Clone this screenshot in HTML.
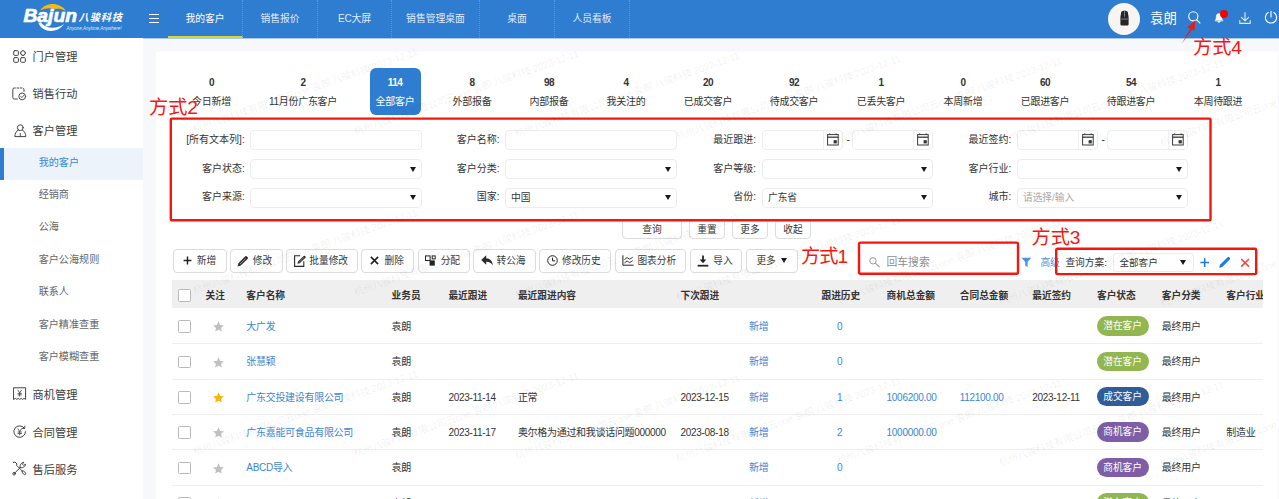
<!DOCTYPE html>
<html lang="zh-CN">
<head>
<meta charset="utf-8">
<title>我的客户</title>
<style>
*{box-sizing:border-box;margin:0;padding:0}
html,body{width:1279px;height:499px;overflow:hidden;background:#f7f8fc}
body{font-family:"Liberation Sans","Noto Sans CJK SC",sans-serif;font-size:11px;color:#333;position:relative}
.a{position:absolute;white-space:nowrap;line-height:1}
/* header */
#hd{left:0;top:0;width:1279px;height:38px;background:#2e7dd1}
.tab{top:0;height:38px;color:rgba(255,255,255,.88);font-size:9.8px;line-height:37.4px;text-align:center;border-right:1px dotted rgba(255,255,255,.2)}
.tab.on{border-bottom:2px solid #d6d82a;color:#fff}
/* sidebar */
#sb{left:0;top:38px;width:143px;height:461px;background:#fff}
.m1{left:32.6px;font-size:11.2px;color:#3c3c3c}
.m2{left:38.7px;font-size:10.1px;color:#666}
/* panel */
#pn{left:156px;top:52px;width:1122px;height:447px;background:#fff}

.st{width:100px;text-align:center;font-size:10px;letter-spacing:-.5px;font-weight:bold;color:#333}
.sl{width:100px;text-align:center;font-size:10px;letter-spacing:-.3px;color:#333}
.st.on,.sl.on{color:#fff}
.fl{width:90px;text-align:right;font-size:10px;letter-spacing:0;color:#333}
.fi{height:20px;border:1px solid #ececec;border-radius:4px;background:#fff;font-size:9.7px;line-height:18px;padding-left:5px;color:#333}
.tri{width:0;height:0;border-left:3.4px solid transparent;border-right:3.4px solid transparent;border-top:5px solid #1a1a1a}
.bt{border:1px solid #dcdcdc;border-radius:4px;background:#fff;text-align:center;font-size:9.7px;color:#333}
.tt{font-size:9.7px;color:#3a3a3a}
.th{font-size:9.7px;font-weight:bold;color:#333}
.td{font-size:10px;letter-spacing:-.3px;color:#333}
.lk{color:#3b86d6}
.cb{width:12.8px;height:12.8px;border:1px solid #b9b9b9;border-radius:1.5px;background:#fff}
.star{font-size:13px}
.pill{width:52.2px;height:19.2px;line-height:19px;border-radius:10px;color:#fff;font-size:9.7px;text-align:center}
.wm{font-size:10px;letter-spacing:-.25px;color:rgba(0,0,0,.075);transform:rotate(-19.3deg);transform-origin:0 100%;height:10px}
.rt{color:#f5160f;font-size:19.2px}
</style>
</head>
<body>
<!-- HEADER -->
<div id="hd" class="a"></div>
<div class="a" style="left:0;top:38px;width:1279px;height:1px;background:#a9c9ec"></div><div class="a" style="left:0;top:39px;width:1279px;height:1px;background:#fdfdfe"></div><div class="a" style="left:156px;top:51px;width:1122px;height:1px;background:#fafbfd"></div>
<svg class="a" style="left:15px;top:0" width="130" height="38" viewBox="0 0 130 38">
<path d="M25.2 10.4 C30 2.2 44.5 1.2 51 10.9 C46.5 8.6 43 8.4 40.5 9 C35 7.6 30 8 25.2 10.4Z" fill="#f7b90f"/>
<path d="M23.4 23 C27.5 33.2 42.5 33.6 49 24 C42 29.4 31 29 25.8 22.4Z" fill="#fff"/>
<text x="8.4" y="22.2" font-family="Liberation Sans, sans-serif" font-weight="bold" font-style="italic" font-size="18.6" textLength="53.6" lengthAdjust="spacingAndGlyphs" fill="#fff" stroke="#fff" stroke-width=".7">Bajun</text>
<text x="63.6" y="21.2" font-family="Liberation Sans, Noto Sans CJK SC, sans-serif" font-weight="bold" font-style="italic" font-size="10.2" textLength="43.4" fill="#fff">八骏科技</text>
<text x="51.5" y="29.6" font-family="Liberation Sans, sans-serif" font-style="italic" font-size="4.7" textLength="55" lengthAdjust="spacingAndGlyphs" fill="#fff" fill-opacity=".85">Anyone,Anytime,Anywhere!</text>
</svg>
<!--HR-->
<div class="a" style="left:1108px;top:3px;width:32px;height:32px;border-radius:16px;background:#f6f5f3"></div>
<svg class="a" style="left:1118px;top:9px" width="13" height="18" viewBox="0 0 13 18">
<path d="M3.2 3.2 C3.2 1.2 9.8 1.2 9.8 3.2 L10.6 8 L10.6 15.2 Q10.6 16.6 9.2 16.6 L3.8 16.6 Q2.4 16.6 2.4 15.2 L2.4 8Z" fill="#26262a"/>
<rect x="6.1" y="1.6" width="0.9" height="6" fill="#8a8a8a"/>
<rect x="3.2" y="9.6" width="6.6" height="0.9" fill="#8d8d8d"/>
</svg>
<div class="a" style="left:1150px;top:12px;font-size:13.4px;color:#fff">袁朗</div>
<svg class="a" style="left:1184px;top:8px" width="95" height="22" viewBox="0 0 95 22" fill="none" stroke="#fff" stroke-width="1.1" stroke-linecap="round" stroke-linejoin="round">
<circle cx="9.3" cy="8.3" r="4.6"/><path d="M12.6 11.6 L16 15"/>
<path d="M31.2 12.6 C32.4 11.4 32.2 9.6 32.4 7.6 C32.6 5 37.4 5 37.6 7.6 C37.8 9.6 37.6 11.4 38.8 12.6 Z M33.8 13.8 Q35 15.2 36.2 13.8Z" fill="#fff" stroke-width=".6"/>
<path d="M61 4.6 V12.6 M57.4 9.4 L61 12.8 L64.6 9.4 M55.8 12.6 V15.4 H66.2 V12.6" stroke-opacity=".85"/>
<path d="M87 3.4 V9" /><path d="M84.2 4.6 A5.6 5.6 0 1 0 89.8 4.6"/>
</svg>
<div class="a" style="left:1219.5px;top:10px;width:8px;height:8px;border-radius:4px;background:#f80000"></div>
<!--/HR-->
<div class="a" style="left:149px;top:14px;width:10px;height:9px;border-top:1px solid #fff;border-bottom:1px solid #fff"><div style="margin-top:3px;height:1px;background:#fff"></div></div>
<div class="a tab on" style="left:168px;width:75px">我的客户</div>
<div class="a tab" style="left:243px;width:75px">销售报价</div>
<div class="a tab" style="left:318px;width:74px;font-size:10px;letter-spacing:-.2px">EC大屏</div>
<div class="a tab" style="left:392px;width:88px">销售管理桌面</div>
<div class="a tab" style="left:480px;width:75px">桌面</div>
<div class="a tab" style="left:555px;width:75px">人员看板</div>

<!-- SIDEBAR -->
<div id="sb" class="a"></div>
<div class="a" style="left:0;top:147.5px;width:143px;height:32.3px;background:#edf3fb"></div><div class="a" style="left:0;top:147.5px;width:3.5px;height:32.3px;background:#2e7dd1"></div>
<svg class="a" style="left:13px;top:49.6px" width="13" height="13" viewBox="0 0 13 13" stroke="#444" stroke-width="1" fill="none" stroke-linecap="round" stroke-linejoin="round"><rect x=".7" y=".7" width="4.7" height="4.7" rx="1"/><rect x=".7" y="7.6" width="4.7" height="4.7" rx="1"/><rect x="7.6" y="7.6" width="4.7" height="4.7" rx="1"/><rect x="7.9" y="1" width="4.1" height="4.1" rx="1.2" transform="rotate(45 9.95 3.05)"/></svg><div class="a m1" style="top:52.3px">门户管理</div>
<svg class="a" style="left:12.4px;top:86.6px" width="15" height="14" viewBox="0 0 15 14" stroke="#444" stroke-width="1" fill="none" stroke-linecap="round" stroke-linejoin="round"><path d="M3.4 1H2.2Q.8 1 .8 2.4V10.6Q.8 12 2.2 12H5.4"/><path d="M5 1H6.6M8.2 1H9.8M11.2 1.2Q12 1.6 12 2.6V4.4"/><circle cx="10.2" cy="9.4" r="3.4"/><path d="M8.7 9.4L9.9 10.6L11.8 8.4" stroke-width=".9"/></svg><div class="a m1" style="top:89.4px">销售行动</div>
<svg class="a" style="left:13.6px;top:123.6px" width="13" height="14" viewBox="0 0 13 14" stroke="#444" stroke-width="1" fill="none" stroke-linecap="round" stroke-linejoin="round"><circle cx="6.3" cy="3.7" r="2.9"/><path d="M4.2 6C1.8 7.4.9 10 .8 12.6H11.8C11.7 10 10.8 7.4 8.4 6"/><path d="M6.3 9.4V12.4" stroke-width=".9"/></svg><div class="a m1" style="top:126.4px">客户管理</div>
<div class="a m2" style="top:157.7px;color:#3a86d6">我的客户</div><div class="a m2" style="top:190.2px">经销商</div><div class="a m2" style="top:222.2px">公海</div><div class="a m2" style="top:254.7px">客户公海规则</div><div class="a m2" style="top:287.2px">联系人</div><div class="a m2" style="top:319.6px">客户精准查重</div><div class="a m2" style="top:351.7px">客户模糊查重</div>
<svg class="a" style="left:12.6px;top:387.4px" width="14" height="14" viewBox="0 0 14 14" stroke="#444" stroke-width="1" fill="none" stroke-linecap="round" stroke-linejoin="round"><path d="M.8 .8H12.6V12.4L11.1 11.4L9.6 12.4L8.2 11.4L6.7 12.4L5.2 11.4L3.8 12.4L2.3 11.4L.8 12.4Z"/><path d="M4.9 3.2L6.7 5.8L8.5 3.2M6.7 5.8V9.4M5 6.4H8.4M5 7.9H8.4" stroke-width=".85"/></svg><div class="a m1" style="top:390.4px">商机管理</div>
<svg class="a" style="left:12.6px;top:425.2px" width="14" height="14" viewBox="0 0 14 14" stroke="#444" stroke-width="1" fill="none" stroke-linecap="round" stroke-linejoin="round"><path d="M11.4 3.2A5.8 5.8 0 1 0 12.5 6.6"/><path d="M11.8 1L11.6 3.6L9 3.4" stroke-width=".9"/><path d="M4.9 3.8L6.7 6.4L8.5 3.8M6.7 6.4V10M5 7H8.4M5 8.5H8.4" stroke-width=".85"/></svg><div class="a m1" style="top:427.9px">合同管理</div>
<svg class="a" style="left:12.2px;top:461.4px" width="15" height="15" viewBox="0 0 15 15" stroke="#444" stroke-width="1" fill="none" stroke-linecap="round" stroke-linejoin="round"><path d="M2.2 12.6L8.2 6.6"/><path d="M8.2 6.6C7.4 4.4 9 1.6 11.8 1.2L10.4 3.2L11.6 4.4L13.6 3.2C13.2 5.8 10.4 7.4 8.2 6.6Z"/><circle cx="2.1" cy="12.7" r="1.3"/><path d="M1.4 1.4L3 1L5 3L4.4 4.2L10.8 10.6"/><path d="M10 10.4L11 9.4L13.6 12Q14 13 13.2 13.6Q12.4 14 11.8 13.4Z"/></svg><div class="a m1" style="top:464.9px">售后服务</div>

<!-- PANEL -->
<div id="pn" class="a"></div>
<!--STATS-->
<div class="a" style="left:369.5px;top:68px;width:51px;height:47px;border-radius:6px;background:#2e7dd1"></div>
<div class="a st" style="left:161.5px;top:77.6px">0</div><div class="a sl" style="left:161.5px;top:96.5px">今日新增</div>
<div class="a st" style="left:253px;top:77.6px">2</div><div class="a sl" style="left:253px;top:96.5px">11月份广东客户</div>
<div class="a st on" style="left:345px;top:77.6px">114</div><div class="a sl on" style="left:345px;top:96.5px">全部客户</div>
<div class="a st" style="left:422px;top:77.6px">8</div><div class="a sl" style="left:422px;top:96.5px">外部报备</div>
<div class="a st" style="left:499px;top:77.6px">98</div><div class="a sl" style="left:499px;top:96.5px">内部报备</div>
<div class="a st" style="left:576px;top:77.6px">4</div><div class="a sl" style="left:576px;top:96.5px">我关注的</div>
<div class="a st" style="left:658px;top:77.6px">20</div><div class="a sl" style="left:658px;top:96.5px">已成交客户</div>
<div class="a st" style="left:744px;top:77.6px">92</div><div class="a sl" style="left:744px;top:96.5px">待成交客户</div>
<div class="a st" style="left:831px;top:77.6px">1</div><div class="a sl" style="left:831px;top:96.5px">已丢失客户</div>
<div class="a st" style="left:913px;top:77.6px">0</div><div class="a sl" style="left:913px;top:96.5px">本周新增</div>
<div class="a st" style="left:995px;top:77.6px">60</div><div class="a sl" style="left:995px;top:96.5px">已跟进客户</div>
<div class="a st" style="left:1081px;top:77.6px">54</div><div class="a sl" style="left:1081px;top:96.5px">待跟进客户</div>
<div class="a st" style="left:1168px;top:77.6px">1</div><div class="a sl" style="left:1168px;top:96.5px">本周待跟进</div>
<!--/STATS-->
<!--FILTER-->
<div class="a fl" style="left:154.7px;top:134.7px">[所有文本列]:</div><div class="a fi" style="left:250px;top:130px;width:172px"></div>
<div class="a fl" style="left:409.6px;top:134.7px">客户名称:</div><div class="a fi" style="left:505px;top:130px;width:172px"></div>
<div class="a fl" style="left:666px;top:134.7px">最近跟进:</div><div class="a fi" style="left:762px;top:130px;width:81px"></div><div class="a" style="left:823px;top:131px;width:1px;height:18px;background:#efefef"></div><svg class="a" style="left:827.4px;top:133px" width="12" height="13" viewBox="0 0 12 13"><rect x=".6" y="1.6" width="10.6" height="10.4" fill="#fff" stroke="#3a3a3a" stroke-width="1"/><path d="M.6 4.2H11.2" stroke="#3a3a3a" stroke-width="1.3"/><path d="M2.6 .4V1.6M9.2 .4V1.6" stroke="#3a3a3a" stroke-width="1.2"/><rect x="6.6" y="7.2" width="3.2" height="3.2" fill="#333"/></svg><div class="a fi" style="left:852px;top:130px;width:81px"></div><div class="a" style="left:913px;top:131px;width:1px;height:18px;background:#efefef"></div><svg class="a" style="left:917.4px;top:133px" width="12" height="13" viewBox="0 0 12 13"><rect x=".6" y="1.6" width="10.6" height="10.4" fill="#fff" stroke="#3a3a3a" stroke-width="1"/><path d="M.6 4.2H11.2" stroke="#3a3a3a" stroke-width="1.3"/><path d="M2.6 .4V1.6M9.2 .4V1.6" stroke="#3a3a3a" stroke-width="1.2"/><rect x="6.6" y="7.2" width="3.2" height="3.2" fill="#333"/></svg><div class="a" style="left:846.6px;top:134.6px;font-size:10px;color:#333">-</div>
<div class="a fl" style="left:921.3px;top:134.7px">最近签约:</div><div class="a fi" style="left:1017px;top:130px;width:81px"></div><div class="a" style="left:1078px;top:131px;width:1px;height:18px;background:#efefef"></div><svg class="a" style="left:1082.4px;top:133px" width="12" height="13" viewBox="0 0 12 13"><rect x=".6" y="1.6" width="10.6" height="10.4" fill="#fff" stroke="#3a3a3a" stroke-width="1"/><path d="M.6 4.2H11.2" stroke="#3a3a3a" stroke-width="1.3"/><path d="M2.6 .4V1.6M9.2 .4V1.6" stroke="#3a3a3a" stroke-width="1.2"/><rect x="6.6" y="7.2" width="3.2" height="3.2" fill="#333"/></svg><div class="a fi" style="left:1107px;top:130px;width:81px"></div><div class="a" style="left:1168px;top:131px;width:1px;height:18px;background:#efefef"></div><svg class="a" style="left:1172.4px;top:133px" width="12" height="13" viewBox="0 0 12 13"><rect x=".6" y="1.6" width="10.6" height="10.4" fill="#fff" stroke="#3a3a3a" stroke-width="1"/><path d="M.6 4.2H11.2" stroke="#3a3a3a" stroke-width="1.3"/><path d="M2.6 .4V1.6M9.2 .4V1.6" stroke="#3a3a3a" stroke-width="1.2"/><rect x="6.6" y="7.2" width="3.2" height="3.2" fill="#333"/></svg><div class="a" style="left:1101.6px;top:134.6px;font-size:10px;color:#333">-</div>
<div class="a fl" style="left:154.7px;top:163.5px">客户状态:</div><div class="a fi" style="left:250px;top:159px;width:172px"></div><div class="a tri" style="left:410.4px;top:166.6px"></div>
<div class="a fl" style="left:409.6px;top:163.5px">客户分类:</div><div class="a fi" style="left:505px;top:159px;width:172px"></div><div class="a tri" style="left:665.4px;top:166.6px"></div>
<div class="a fl" style="left:666px;top:163.5px">客户等级:</div><div class="a fi" style="left:762px;top:159px;width:171px"></div><div class="a tri" style="left:921.4px;top:166.6px"></div>
<div class="a fl" style="left:921.3px;top:163.5px">客户行业:</div><div class="a fi" style="left:1017px;top:159px;width:171px"></div><div class="a tri" style="left:1176.4px;top:166.6px"></div>
<div class="a fl" style="left:154.7px;top:192.4px">客户来源:</div><div class="a fi" style="left:250px;top:188px;width:172px"></div><div class="a tri" style="left:410.4px;top:194.7px"></div>
<div class="a fl" style="left:409.6px;top:192.4px">国家:</div><div class="a fi" style="left:505px;top:188px;width:172px">中国</div><div class="a tri" style="left:665.4px;top:194.7px"></div>
<div class="a fl" style="left:666px;top:192.4px">省份:</div><div class="a fi" style="left:762px;top:188px;width:171px">广东省</div><div class="a tri" style="left:921.4px;top:194.7px"></div>
<div class="a fl" style="left:921.3px;top:192.4px">城市:</div><div class="a fi" style="left:1017px;top:188px;width:171px"><span style="color:#a9a9a9">请选择/输入</span></div><div class="a tri" style="left:1176.4px;top:194.7px"></div>
<div class="a bt" style="left:622px;top:219px;width:60px;height:20px;line-height:19px">查询</div><div class="a bt" style="left:689px;top:219px;width:36px;height:20px;line-height:19px">重置</div><div class="a bt" style="left:732px;top:219px;width:36px;height:20px;line-height:19px">更多</div><div class="a bt" style="left:775px;top:219px;width:36px;height:20px;line-height:19px">收起</div>
<!--/FILTER-->
<!--TOOLBAR-->
<div class="a bt" style="left:173.2px;top:249.2px;width:53.6px;height:23.4px"></div><div class="a" style="left:183px;top:256.3px;height:9px"><svg width="9" height="9" viewBox="0 0 9 9"><path d="M4.5 .6V8.4M.6 4.5H8.4" stroke="#222" stroke-width="1.5" fill="none"/></svg></div><div class="a tt" style="left:196.8px;top:255.6px">新增</div>
<div class="a bt" style="left:230px;top:249.2px;width:53px;height:23.4px"></div><div class="a" style="left:237.1px;top:254.8px;height:12px"><svg width="12" height="12" viewBox="0 0 12 12"><path d="M.6 11.4 L1.4 8.2 L8.3 1.3 Q9.1 .6 9.9 1.4 L10.7 2.2 Q11.4 3 10.7 3.8 L3.8 10.6Z" fill="#2a2a2a"/><path d="M2.9 9.2 L8.6 3.5" stroke="#fff" stroke-width=".7" stroke-opacity=".75"/></svg></div><div class="a tt" style="left:252.8px;top:255.6px">修改</div>
<div class="a bt" style="left:286px;top:249.2px;width:71.8px;height:23.4px"></div><div class="a" style="left:293.9px;top:254.8px;height:12px"><svg width="13" height="12" viewBox="0 0 13 12"><path d="M9.8 6.2V11.4H.6V.8H6.2" stroke="#2a2a2a" stroke-width="1.1" fill="none"/><path d="M3.5 8.7 L4 6.6 L9.7 .9 Q10.3 .4 10.9 1 L11.5 1.6 Q12 2.2 11.5 2.8 L5.7 8.3Z" fill="#2a2a2a"/><path d="M5.2 7.2 L9.9 2.5" stroke="#fff" stroke-width=".6" stroke-opacity=".7"/></svg></div><div class="a tt" style="left:309.3px;top:255.6px">批量修改</div>
<div class="a bt" style="left:361px;top:249.2px;width:53.4px;height:23.4px"></div><div class="a" style="left:370px;top:256.3px;height:9px"><svg width="9" height="9" viewBox="0 0 9 9"><path d="M.9 .9L8.1 8.1M8.1 .9L.9 8.1" stroke="#222" stroke-width="1.6" fill="none"/></svg></div><div class="a tt" style="left:384.5px;top:255.6px">删除</div>
<div class="a bt" style="left:417.8px;top:249.2px;width:52.4px;height:23.4px"></div><div class="a" style="left:424.8px;top:255.3px;height:11px"><svg width="11" height="11" viewBox="0 0 11 11"><rect x=".5" y=".9" width="4.6" height="4.6" fill="none" stroke="#222" stroke-width="1"/><rect x="7.2" y=".9" width="3" height="3" fill="none" stroke="#222" stroke-width="1"/><rect x="4.6" y="5.4" width="5.2" height="5.2" fill="#222"/></svg></div><div class="a tt" style="left:440.7px;top:255.6px">分配</div>
<div class="a bt" style="left:473.3px;top:249.2px;width:62.4px;height:23.4px"></div><div class="a" style="left:481px;top:255.3px;height:11px"><svg width="12" height="11" viewBox="0 0 12 11"><path d="M5.2 .3 L.2 5 L5.2 9.7 V6.8 C8.2 6.7 10.2 7.8 11.8 10.6 C11.6 6 9 3.4 5.2 3.2Z" fill="#2a2a2a"/></svg></div><div class="a tt" style="left:496.5px;top:255.6px">转公海</div>
<div class="a bt" style="left:539.3px;top:249.2px;width:71.5px;height:23.4px"></div><div class="a" style="left:546.6px;top:255.3px;height:11px"><svg width="11" height="11" viewBox="0 0 11 11"><circle cx="5.5" cy="5.5" r="4.8" fill="none" stroke="#222" stroke-width="1"/><path d="M5.5 2.6V5.8H8.2" fill="none" stroke="#222" stroke-width="1"/></svg></div><div class="a tt" style="left:562px;top:255.6px">修改历史</div>
<div class="a bt" style="left:614.7px;top:249.2px;width:71.7px;height:23.4px"></div><div class="a" style="left:621.6px;top:255.3px;height:11px"><svg width="12" height="11" viewBox="0 0 12 11"><path d="M.9 .4V10.2H11.6" fill="none" stroke="#222" stroke-width="1"/><path d="M2.4 4.6 L5 2.6 L7.6 4.2 L10.8 2.2 M2.4 8 L5 6 L7.6 7.6 L10.8 5.6" fill="none" stroke="#222" stroke-width=".9"/></svg></div><div class="a tt" style="left:637.4px;top:255.6px">图表分析</div>
<div class="a bt" style="left:690.4px;top:249.2px;width:51.9px;height:23.4px"></div><div class="a" style="left:697.4px;top:254.8px;height:12px"><svg width="12" height="12" viewBox="0 0 11 11"><path d="M5.5 .4V6.4" stroke="#222" stroke-width="1.6" fill="none"/><path d="M2.4 4.2 L5.5 7.6 L8.6 4.2Z" fill="#222"/><path d="M.6 9.8H10.4" stroke="#222" stroke-width="1.6"/></svg></div><div class="a tt" style="left:713.3px;top:255.6px">导入</div>
<div class="a bt" style="left:746.4px;top:249.2px;width:51.8px;height:23.4px"></div><div class="a tt" style="left:756.4px;top:255.6px">更多</div>
<div class="a tri" style="left:781.4px;top:258.2px"></div>
<svg class="a" style="left:868px;top:256px" width="14" height="14" viewBox="0 0 14 14"><circle cx="5" cy="4.8" r="3.2" fill="none" stroke="#9a9a9a" stroke-width="1"/><path d="M7.4 7.2L11.6 11.2" stroke="#9a9a9a" stroke-width="1.1"/></svg><div class="a" style="left:886.5px;top:257px;font-size:10.8px;color:#8e8e8e">回车搜索</div>
<svg class="a" style="left:1021px;top:257px" width="11" height="11" viewBox="0 0 11 11"><path d="M.6 .8H10.2L6.6 5V10L4.2 8.6V5Z" fill="#4a93dd"/></svg><div class="a" style="left:1040.4px;top:257.6px;font-size:9.7px;color:#4a90d9">高级</div>
<div class="a" style="left:1065.4px;top:257.8px;font-size:9.7px;color:#333">查询方案:</div><div class="a fi" style="left:1113px;top:253px;width:81px;height:19px;border-radius:3px"></div><div class="a" style="left:1119.4px;top:258px;font-size:9.6px;color:#333">全部客户</div><div class="a tri" style="left:1180.4px;top:260.2px"></div>
<svg class="a" style="left:1199px;top:255px" width="54" height="15" viewBox="0 0 54 15"><path d="M5.7 3.3V11.9M1.4 7.6H10" stroke="#1b7ce0" stroke-width="1.5" fill="none"/><path d="M20.2 12.8 L21 9.8 L28.6 2.2 Q29.4 1.5 30.2 2.3 L30.8 2.9 Q31.5 3.7 30.8 4.5 L23.2 12Z" fill="#1b7ce0"/><path d="M42.2 4L50 11.6M50 4L42.2 11.6" stroke="#ee4a3e" stroke-width="1.6" fill="none"/></svg>
<!--/TOOLBAR-->
<!--TABLE-->
<div class="a" style="left:172px;top:280.3px;width:1091px;height:27.9px;background:#efefef"></div>
<div class="a" style="left:172px;top:280px;width:1091px;height:30px;overflow:hidden"><div class="a th" style="left:33.6px;top:10.8px">关注</div><div class="a th" style="left:74.3px;top:10.8px">客户名称</div><div class="a th" style="left:219.6px;top:10.8px">业务员</div><div class="a th" style="left:276.4px;top:10.8px">最近跟进</div><div class="a th" style="left:345.9px;top:10.8px">最近跟进内容</div><div class="a th" style="left:508.5px;top:10.8px">下次跟进</div><div class="a th" style="left:649.5px;top:10.8px">跟进历史</div><div class="a th" style="left:714.6px;top:10.8px">商机总金额</div><div class="a th" style="left:787.8px;top:10.8px">合同总金额</div><div class="a th" style="left:860.3px;top:10.8px">最近签约</div><div class="a th" style="left:925px;top:10.8px">客户状态</div><div class="a th" style="left:989.8px;top:10.8px">客户分类</div><div class="a th" style="left:1054.3px;top:10.8px">客户行业</div></div>
<div class="a cb" style="left:178.2px;top:288.8px"></div>
<div class="a cb" style="left:178.2px;top:320.4px"></div><svg class="a" style="left:212.8px;top:321.2px" width="11" height="11" viewBox="0 0 11 11"><path d="M5.5 .3L7.1 3.9L10.9 4.3L8 6.9L8.9 10.6L5.5 8.7L2.1 10.6L3 6.9L.1 4.3L3.9 3.9Z" fill="#c0c0c0"/></svg><div class="a td lk" style="left:246.3px;top:322.0px">大广发</div><div class="a td" style="left:391.6px;top:322.0px">袁朗</div><div class="a td lk" style="left:749px;top:322.0px">新增</div><div class="a td lk" style="left:837px;top:322.0px">0</div><div class="a pill" style="left:1096.5px;top:316.4px;background:#92b650">潜在客户</div><div class="a td" style="left:1161.8px;top:322.0px">最终用户</div><div class="a" style="left:172px;top:343.4px;width:1091px;height:1px;background:#eeeeee"></div>
<div class="a cb" style="left:178.2px;top:355.7px"></div><svg class="a" style="left:212.8px;top:356.5px" width="11" height="11" viewBox="0 0 11 11"><path d="M5.5 .3L7.1 3.9L10.9 4.3L8 6.9L8.9 10.6L5.5 8.7L2.1 10.6L3 6.9L.1 4.3L3.9 3.9Z" fill="#c0c0c0"/></svg><div class="a td lk" style="left:246.3px;top:357.3px">张慧颖</div><div class="a td" style="left:391.6px;top:357.3px">袁朗</div><div class="a td lk" style="left:749px;top:357.3px">新增</div><div class="a td lk" style="left:837px;top:357.3px">0</div><div class="a pill" style="left:1096.5px;top:351.7px;background:#92b650">潜在客户</div><div class="a td" style="left:1161.8px;top:357.3px">最终用户</div><div class="a" style="left:172px;top:378.7px;width:1091px;height:1px;background:#eeeeee"></div>
<div class="a cb" style="left:178.2px;top:391.0px"></div><svg class="a" style="left:212.8px;top:391.8px" width="11" height="11" viewBox="0 0 11 11"><path d="M5.5 .3L7.1 3.9L10.9 4.3L8 6.9L8.9 10.6L5.5 8.7L2.1 10.6L3 6.9L.1 4.3L3.9 3.9Z" fill="#f9b50d"/></svg><div class="a td lk" style="left:246.3px;top:392.6px">广东交投建设有限公司</div><div class="a td" style="left:391.6px;top:392.6px">袁朗</div><div class="a td" style="left:448.4px;top:392.6px">2023-11-14</div><div class="a td" style="left:517.9px;top:392.6px">正常</div><div class="a td" style="left:680.5px;top:392.6px">2023-12-15</div><div class="a td lk" style="left:749px;top:392.6px">新增</div><div class="a td lk" style="left:837px;top:392.6px">1</div><div class="a td lk" style="left:886.6px;top:392.6px">1006200.00</div><div class="a td lk" style="left:959.8px;top:392.6px">112100.00</div><div class="a td" style="left:1032.3px;top:392.6px">2023-12-11</div><div class="a pill" style="left:1096.5px;top:387.0px;background:#2f5d98">成交客户</div><div class="a td" style="left:1161.8px;top:392.6px">最终用户</div><div class="a" style="left:172px;top:414.0px;width:1091px;height:1px;background:#eeeeee"></div>
<div class="a cb" style="left:178.2px;top:426.4px"></div><svg class="a" style="left:212.8px;top:427.2px" width="11" height="11" viewBox="0 0 11 11"><path d="M5.5 .3L7.1 3.9L10.9 4.3L8 6.9L8.9 10.6L5.5 8.7L2.1 10.6L3 6.9L.1 4.3L3.9 3.9Z" fill="#c0c0c0"/></svg><div class="a td lk" style="left:246.3px;top:428.0px">广东嘉能可食品有限公司</div><div class="a td" style="left:391.6px;top:428.0px">袁朗</div><div class="a td" style="left:448.4px;top:428.0px">2023-11-17</div><div class="a td" style="left:517.9px;top:428.0px">奥尔格为通过和我谈话问题000000</div><div class="a td" style="left:680.5px;top:428.0px">2023-08-18</div><div class="a td lk" style="left:749px;top:428.0px">新增</div><div class="a td lk" style="left:837px;top:428.0px">2</div><div class="a td lk" style="left:886.6px;top:428.0px">1000000.00</div><div class="a pill" style="left:1096.5px;top:422.4px;background:#7d5ea7">商机客户</div><div class="a td" style="left:1161.8px;top:428.0px">最终用户</div><div class="a td" style="left:1226.3px;top:428.0px">制造业</div><div class="a" style="left:172px;top:449.4px;width:1091px;height:1px;background:#eeeeee"></div>
<div class="a cb" style="left:178.2px;top:461.7px"></div><svg class="a" style="left:212.8px;top:462.5px" width="11" height="11" viewBox="0 0 11 11"><path d="M5.5 .3L7.1 3.9L10.9 4.3L8 6.9L8.9 10.6L5.5 8.7L2.1 10.6L3 6.9L.1 4.3L3.9 3.9Z" fill="#c0c0c0"/></svg><div class="a td lk" style="left:246.3px;top:463.3px">ABCD导入</div><div class="a td" style="left:391.6px;top:463.3px">袁朗</div><div class="a td lk" style="left:749px;top:463.3px">新增</div><div class="a td lk" style="left:837px;top:463.3px">0</div><div class="a pill" style="left:1096.5px;top:457.7px;background:#7d5ea7">商机客户</div><div class="a td" style="left:1161.8px;top:463.3px">最终用户</div><div class="a" style="left:172px;top:484.7px;width:1091px;height:1px;background:#eeeeee"></div>
<div class="a cb" style="left:178.2px;top:497.0px"></div><svg class="a" style="left:212.8px;top:497.8px" width="11" height="11" viewBox="0 0 11 11"><path d="M5.5 .3L7.1 3.9L10.9 4.3L8 6.9L8.9 10.6L5.5 8.7L2.1 10.6L3 6.9L.1 4.3L3.9 3.9Z" fill="#c0c0c0"/></svg><div class="a td" style="left:391.6px;top:498.6px">袁朗</div><div class="a td lk" style="left:749px;top:498.6px">新增</div><div class="a td lk" style="left:837px;top:498.6px">0</div><div class="a pill" style="left:1096.5px;top:493.0px;background:#92b650">潜在客户</div><div class="a td" style="left:1161.8px;top:498.6px">最终用户</div><div class="a" style="left:172px;top:520.0px;width:1091px;height:1px;background:#eeeeee"></div>
<!--/TABLE-->
<!--ANNOT-->
<svg class="a" style="left:0;top:0;pointer-events:none" width="1279" height="499" viewBox="0 0 1279 499" fill="none" stroke="#f5160f" stroke-width="2.4"><rect x="170.8" y="118.6" width="1039.7" height="101.6" rx="1"/><rect x="859" y="242.6" width="159" height="31.2" rx="1.5"/><rect x="1056.2" y="248.7" width="200" height="25.4" rx="1.5"/><path d="M1182 43.5 L1190.4 28.6 L1187.4 27.4 L1195.4 20 L1194.4 30.6 L1191.8 29.4Z" fill="#f5160f" stroke="none"/></svg><div class="a rt" style="left:149px;top:98px">方式2</div><div class="a rt" style="left:801px;top:246.5px;letter-spacing:-.9px">方式1</div><div class="a rt" style="left:1031.5px;top:227.5px">方式3</div><div class="a rt" style="left:1193px;top:37.5px">方式4</div>
<!--/ANNOT-->
<!--WM-->
<div class="a" style="left:156px;top:38px;width:1123px;height:461px;overflow:hidden;pointer-events:none"><div class="a wm" style="left:39.0px;top:87.0px">杭州八骏科技有限公司云one 袁朗 八骏科技 2023-12-11</div><div class="a wm" style="left:200.1px;top:89.2px">杭州八骏科技有限公司云one 袁朗 八骏科技 2023-12-11</div><div class="a wm" style="left:361.2px;top:91.4px">杭州八骏科技有限公司云one 袁朗 八骏科技 2023-12-11</div><div class="a wm" style="left:522.3px;top:93.6px">杭州八骏科技有限公司云one 袁朗 八骏科技 2023-12-11</div><div class="a wm" style="left:683.4px;top:95.8px">杭州八骏科技有限公司云one 袁朗 八骏科技 2023-12-11</div><div class="a wm" style="left:844.5px;top:98.0px">杭州八骏科技有限公司云one 袁朗 八骏科技 2023-12-11</div><div class="a wm" style="left:1005.6px;top:100.2px">杭州八骏科技有限公司云one 袁朗 八骏科技 2023-12-11</div><div class="a wm" style="left:1166.7px;top:102.4px">杭州八骏科技有限公司云one 袁朗 八骏科技 2023-12-11</div><div class="a wm" style="left:39.0px;top:248.0px">杭州八骏科技有限公司云one 袁朗 八骏科技 2023-12-11</div><div class="a wm" style="left:200.1px;top:250.2px">杭州八骏科技有限公司云one 袁朗 八骏科技 2023-12-11</div><div class="a wm" style="left:361.2px;top:252.4px">杭州八骏科技有限公司云one 袁朗 八骏科技 2023-12-11</div><div class="a wm" style="left:522.3px;top:254.6px">杭州八骏科技有限公司云one 袁朗 八骏科技 2023-12-11</div><div class="a wm" style="left:683.4px;top:256.8px">杭州八骏科技有限公司云one 袁朗 八骏科技 2023-12-11</div><div class="a wm" style="left:844.5px;top:259.0px">杭州八骏科技有限公司云one 袁朗 八骏科技 2023-12-11</div><div class="a wm" style="left:1005.6px;top:261.2px">杭州八骏科技有限公司云one 袁朗 八骏科技 2023-12-11</div><div class="a wm" style="left:1166.7px;top:263.4px">杭州八骏科技有限公司云one 袁朗 八骏科技 2023-12-11</div><div class="a wm" style="left:39.0px;top:409.0px">杭州八骏科技有限公司云one 袁朗 八骏科技 2023-12-11</div><div class="a wm" style="left:200.1px;top:411.2px">杭州八骏科技有限公司云one 袁朗 八骏科技 2023-12-11</div><div class="a wm" style="left:361.2px;top:413.4px">杭州八骏科技有限公司云one 袁朗 八骏科技 2023-12-11</div><div class="a wm" style="left:522.3px;top:415.6px">杭州八骏科技有限公司云one 袁朗 八骏科技 2023-12-11</div><div class="a wm" style="left:683.4px;top:417.8px">杭州八骏科技有限公司云one 袁朗 八骏科技 2023-12-11</div><div class="a wm" style="left:844.5px;top:420.0px">杭州八骏科技有限公司云one 袁朗 八骏科技 2023-12-11</div><div class="a wm" style="left:1005.6px;top:422.2px">杭州八骏科技有限公司云one 袁朗 八骏科技 2023-12-11</div><div class="a wm" style="left:1166.7px;top:424.4px">杭州八骏科技有限公司云one 袁朗 八骏科技 2023-12-11</div><div class="a wm" style="left:39.0px;top:570.0px">杭州八骏科技有限公司云one 袁朗 八骏科技 2023-12-11</div><div class="a wm" style="left:200.1px;top:572.2px">杭州八骏科技有限公司云one 袁朗 八骏科技 2023-12-11</div><div class="a wm" style="left:361.2px;top:574.4px">杭州八骏科技有限公司云one 袁朗 八骏科技 2023-12-11</div><div class="a wm" style="left:522.3px;top:576.6px">杭州八骏科技有限公司云one 袁朗 八骏科技 2023-12-11</div><div class="a wm" style="left:683.4px;top:578.8px">杭州八骏科技有限公司云one 袁朗 八骏科技 2023-12-11</div><div class="a wm" style="left:844.5px;top:581.0px">杭州八骏科技有限公司云one 袁朗 八骏科技 2023-12-11</div><div class="a wm" style="left:1005.6px;top:583.2px">杭州八骏科技有限公司云one 袁朗 八骏科技 2023-12-11</div><div class="a wm" style="left:1166.7px;top:585.4px">杭州八骏科技有限公司云one 袁朗 八骏科技 2023-12-11</div></div>
<!--/WM-->
</body>
</html>
